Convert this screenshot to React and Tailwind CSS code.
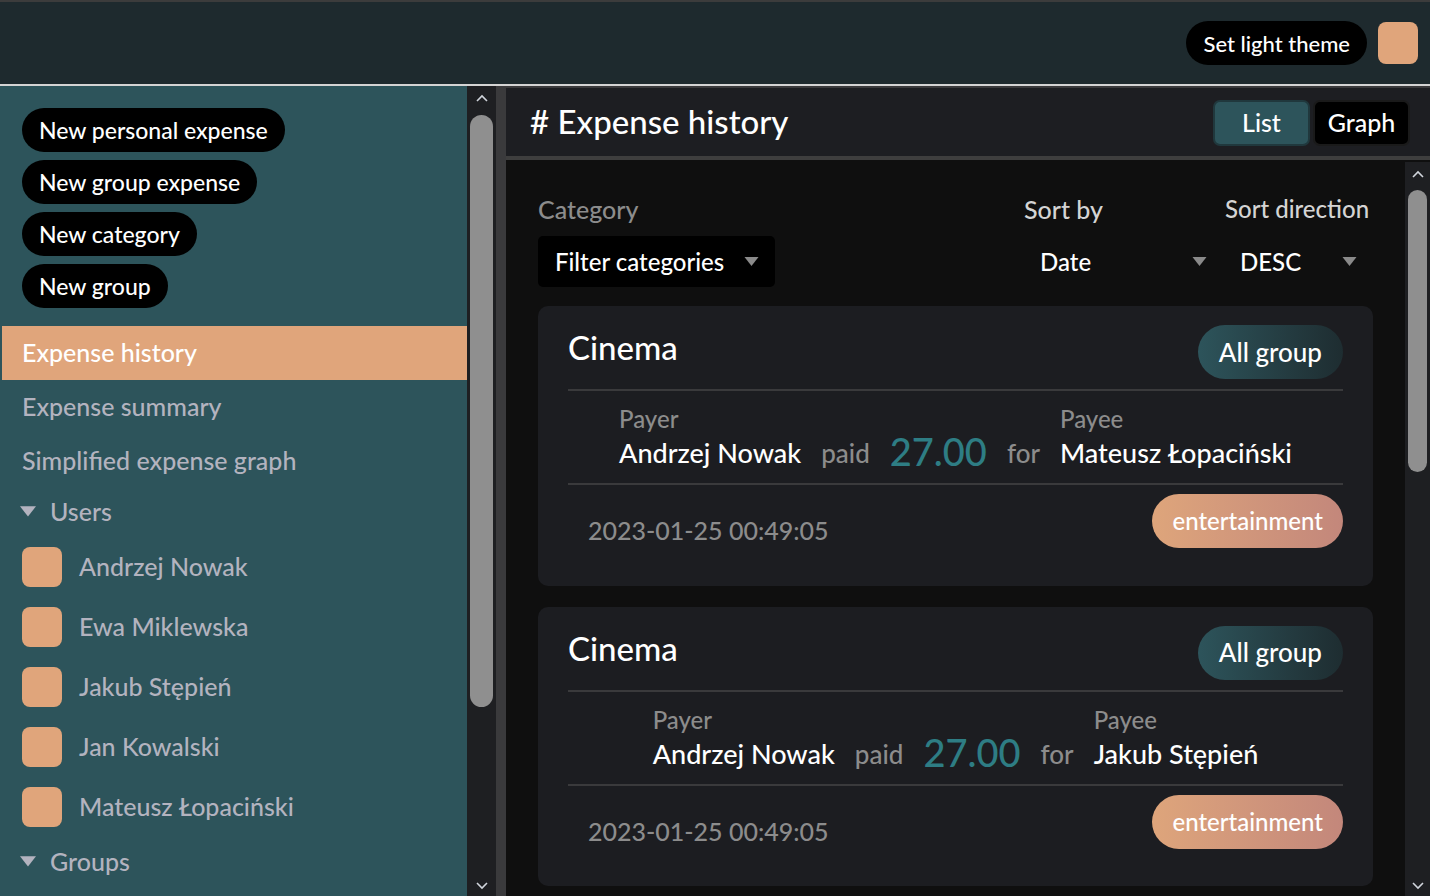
import React from 'react';

const USERS = ['Andrzej Nowak', 'Ewa Miklewska', 'Jakub Stępień', 'Jan Kowalski', 'Mateusz Łopaciński'];

const EXPENSES = [
    { title: 'Cinema', group: 'All group', payer: 'Andrzej Nowak', amount: '27.00', payee: 'Mateusz Łopaciński', date: '2023-01-25 00:49:05', category: 'entertainment' },
    { title: 'Cinema', group: 'All group', payer: 'Andrzej Nowak', amount: '27.00', payee: 'Jakub Stępień', date: '2023-01-25 00:49:05', category: 'entertainment' }
];

const FONT = { fontFamily: 'Lato, "Noto Sans", sans-serif' };

function Caret({ className }) {
    return (
        <svg viewBox="0 0 14 10" className={className}>
            <path d="M0 0 L14 0 L7 9 Z" fill="currentColor" />
        </svg>
    );
}

function Chevron({ up }) {
    return (
        <svg viewBox="0 0 12 8" className="w-[12px] h-[8px] text-gray-300">
            <path d={up ? 'M1 7 L6 2 L11 7' : 'M1 1 L6 6 L11 1'} fill="none" stroke="currentColor" strokeWidth="1.6" />
        </svg>
    );
}

function Scrollbar({ width, thumbTop, thumbHeight }) {
    return (
        <div className="flex flex-col bg-[#1e1f22] h-full shrink-0" style={{ width }}>
            <div className="h-[23px] flex items-center justify-center"><Chevron up /></div>
            <div className="flex-1 px-[3px] pt-[3px]">
                <div className="rounded-full bg-[#8f8f8f]" style={{ marginTop: thumbTop, height: thumbHeight }} />
            </div>
            <div className="h-[21px] flex items-center justify-center"><Chevron /></div>
        </div>
    );
}

function Sidebar() {
    return (
        <div className="w-[467px] shrink-0 bg-[#2d545b] pt-[22px] overflow-hidden">
            <div className="flex flex-col items-start gap-[8px] pl-[22px]">
                {['New personal expense', 'New group expense', 'New category', 'New group'].map((t) => (
                    <button key={t} className="h-[44px] px-[17px] rounded-full bg-black text-white text-[23px]">{t}</button>
                ))}
            </div>
            <div className="mt-[18px] ml-[2px] h-[54px] bg-[#e0a57b] flex items-center pl-[20px] text-white text-[25px]">Expense history</div>
            <div className="text-[#b3b3bf] text-[25px]">
                <div className="h-[54px] flex items-center pl-[22px]">Expense summary</div>
                <div className="h-[53px] flex items-center pl-[22px]">Simplified expense graph</div>
                <div className="h-[50px] flex items-center pl-[20px] gap-[14px]">
                    <Caret className="w-[16px] h-[12px] text-[#b3b3bf]" />
                    Users
                </div>
                {USERS.map((u) => (
                    <div key={u} className="h-[60px] flex items-center pl-[22px] gap-[17px]">
                        <div className="w-[40px] h-[40px] rounded-[8px] bg-[#e0a57b]" />
                        {u}
                    </div>
                ))}
                <div className="h-[50px] flex items-center pl-[20px] gap-[14px]">
                    <Caret className="w-[16px] h-[12px] text-[#b3b3bf]" />
                    Groups
                </div>
            </div>
        </div>
    );
}

function ExpenseCard({ e }) {
    return (
        <div className="bg-[#1c1d21] rounded-[10px] px-[30px] pt-[19px] pb-[36px]">
            <div className="flex items-center justify-between h-[54px]">
                <span className="text-white text-[33px] -mt-[8px]">{e.title}</span>
                <span className="h-[54px] px-[21px] rounded-full bg-gradient-to-r from-[#2d545b] to-[#1e2d31] text-white text-[26px] flex items-center">{e.group}</span>
            </div>
            <div className="mt-[10px] border-t-2 border-[#3a3a3c] border-b-2 pt-[13px] pb-[11px] flex justify-center">
                <div className="flex items-end gap-[20px]">
                    <div className="flex flex-col">
                        <span className="text-[#8c8c8c] text-[24px] leading-[30px]">Payer</span>
                        <span className="text-white text-[27px] leading-[38px]">{e.payer}</span>
                    </div>
                    <span className="text-[#8c8c8c] text-[26px] leading-[38px]">paid</span>
                    <span className="text-[#2e7d84] text-[38px] leading-[42px]">{e.amount}</span>
                    <span className="text-[#8c8c8c] text-[26px] leading-[38px]">for</span>
                    <div className="flex flex-col">
                        <span className="text-[#8c8c8c] text-[24px] leading-[30px]">Payee</span>
                        <span className="text-white text-[27px] leading-[38px]">{e.payee}</span>
                    </div>
                </div>
            </div>
            <div className="mt-[9px] flex items-start justify-between">
                <span className="pl-[20px] pt-[18px] text-[#8c8c8c] text-[25px]">{e.date}</span>
                <span className="h-[54px] px-[20px] rounded-full bg-gradient-to-r from-[#dea57b] to-[#c3877b] text-white text-[24px] flex items-center">{e.category}</span>
            </div>
        </div>
    );
}

function Main() {
    return (
        <div className="flex-1 flex flex-col bg-[#3a3a3c] pl-[10px] pt-[2px] min-w-0">
            <div className="h-[68px] bg-[#1d1e22] flex items-center justify-between pl-[24px] pr-[20px] shrink-0">
                <span className="text-white text-[33px]"># Expense history</span>
                <div className="flex gap-[3px] mt-[2px]">
                    <button className="w-[97px] h-[46px] rounded-[7px] bg-[#2d545b] border-2 border-[#20383d] text-white text-[25px]">List</button>
                    <button className="w-[97px] h-[46px] rounded-[7px] bg-black border-2 border-[#1a1a1a] text-white text-[25px]">Graph</button>
                </div>
            </div>
            <div className="h-[4px] bg-[#3e3e3e] shrink-0" />
            <div className="flex-1 flex bg-[#0f0f0f] min-h-0 pt-[2px]">
                <div className="flex-1 px-[32px] pt-[29px] overflow-hidden">
                    <div className="flex items-start">
                        <div className="flex flex-col">
                            <span className="text-[#8c8c8c] text-[25px] h-[34px]">Category</span>
                            <div className="mt-[11px] w-[237px] h-[51px] rounded-[5px] bg-black flex items-center justify-between pl-[17px] pr-[16px]">
                                <span className="text-white text-[24px]">Filter categories</span>
                                <Caret className="w-[15px] h-[10px] text-[#8a8a8a]" />
                            </div>
                        </div>
                        <div className="ml-[249px] w-[187px] flex flex-col">
                            <span className="text-[#d4d4d4] text-[25px] h-[34px]">Sort by</span>
                            <div className="mt-[11px] h-[51px] flex items-center justify-between pl-[16px] pr-[4px]">
                                <span className="text-white text-[24px]">Date</span>
                                <Caret className="w-[15px] h-[10px] text-[#8a8a8a]" />
                            </div>
                        </div>
                        <div className="ml-[14px] w-[145px] flex flex-col">
                            <span className="text-[#d4d4d4] text-[24px] h-[34px] whitespace-nowrap">Sort direction</span>
                            <div className="mt-[11px] h-[51px] flex items-center justify-between pl-[15px] pr-[13px]">
                                <span className="text-white text-[24px]">DESC</span>
                                <Caret className="w-[15px] h-[10px] text-[#8a8a8a]" />
                            </div>
                        </div>
                    </div>
                    <div className="mt-[19px] flex flex-col gap-[21px]">
                        {EXPENSES.map((e, i) => <ExpenseCard key={i} e={e} />)}
                    </div>
                </div>
                <Scrollbar width={25} thumbTop={2} thumbHeight={282} />
            </div>
        </div>
    );
}

export default function App() {
    return (
        <div className="w-[1430px] h-[896px] flex flex-col bg-[#0f0f0f] overflow-hidden font-medium" style={FONT}>
            <div className="h-[86px] shrink-0 bg-[#1e2a2e] border-t-2 border-[#3c3c3c] border-b-2 border-b-[#d4d4d4] flex items-center justify-end gap-[11px] pr-[12px]">
                <button className="h-[44px] px-[17px] rounded-full bg-black text-white text-[22px]">Set light theme</button>
                <div className="w-[40px] h-[42px] rounded-[8px] bg-[#e0a57b]" />
            </div>
            <div className="flex-1 flex min-h-0">
                <Sidebar />
                <Scrollbar width={29} thumbTop={3} thumbHeight={592} />
                <Main />
            </div>
        </div>
    );
}
